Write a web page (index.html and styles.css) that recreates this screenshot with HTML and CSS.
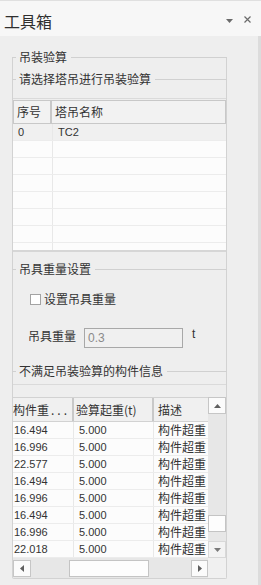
FILE: index.html
```html
<!DOCTYPE html>
<html lang="zh-CN">
<head>
<meta charset="utf-8">
<title>工具箱</title>
<link rel="stylesheet" href="styles.css">
</head>
<body>
<div class="titlebar">
  <span class="title">工具箱</span>
  <div class="tools">
    <svg class="ico-down" width="7" height="4" viewBox="0 0 7 4"><path d="M0 0h7L3.5 4z" fill="#6b6b6b"/></svg>
    <svg class="ico-close" width="7" height="7" viewBox="0 0 7 7"><path d="M0.5 0.5l6 6M6.5 0.5l-6 6" stroke="#6b6b6b" stroke-width="1.2"/></svg>
  </div>
</div>
<div class="main">
  <div class="content">
    <div class="outer">
      <div class="legend legend-top"><span>吊装验算</span></div>
      <div class="legend l-select"><span>请选择塔吊进行吊装验算</span></div>
      <div class="grid1">
        <div class="g1-head"><div class="h1">序号</div><div class="h2">塔吊名称</div></div>
        <div class="g1-body">
          <div class="g1-row sel"><div class="c1">0</div><div class="c2">TC2</div></div>
          <div class="g1-row"><div class="c1"></div><div class="c2"></div></div>
          <div class="g1-row"><div class="c1"></div><div class="c2"></div></div>
          <div class="g1-row"><div class="c1"></div><div class="c2"></div></div>
          <div class="g1-row"><div class="c1"></div><div class="c2"></div></div>
          <div class="g1-row"><div class="c1"></div><div class="c2"></div></div>
          <div class="g1-row"><div class="c1"></div><div class="c2"></div></div>
          <div class="g1-row"><div class="c1"></div><div class="c2"></div></div>
        </div>
      </div>
      <div class="legend l-sling"><span>吊具重量设置</span></div>
      <div class="check-row"><span class="checkbox"></span><span class="check-label">设置吊具重量</span></div>
      <div class="weight-row"><span class="wlabel">吊具重量</span><div class="winput">0.3</div><span class="unit">t</span></div>
      <div class="legend l-fail"><span>不满足吊装验算的构件信息</span></div>
      <div class="grid2">
        <div class="g2-top">
          <div class="g2-main">
            <div class="g2-head"><div class="d1">构件重<span class="dots">...</span></div><div class="d2">验算起重(t)</div><div class="d3">描述</div></div>
            <div class="g2-row"><div class="e1">16.494</div><div class="e2">5.000</div><div class="e3">构件超重</div></div>
            <div class="g2-row"><div class="e1">16.996</div><div class="e2">5.000</div><div class="e3">构件超重</div></div>
            <div class="g2-row"><div class="e1">22.577</div><div class="e2">5.000</div><div class="e3">构件超重</div></div>
            <div class="g2-row"><div class="e1">16.494</div><div class="e2">5.000</div><div class="e3">构件超重</div></div>
            <div class="g2-row"><div class="e1">16.996</div><div class="e2">5.000</div><div class="e3">构件超重</div></div>
            <div class="g2-row"><div class="e1">16.494</div><div class="e2">5.000</div><div class="e3">构件超重</div></div>
            <div class="g2-row"><div class="e1">16.996</div><div class="e2">5.000</div><div class="e3">构件超重</div></div>
            <div class="g2-row"><div class="e1">22.018</div><div class="e2">5.000</div><div class="e3">构件超重</div></div>
          </div>
          <div class="vscroll">
            <div class="sbtn up"><svg width="7" height="4" viewBox="0 0 7 4"><path d="M3.5 0L7 4H0z" fill="#5f5f5f"/></svg></div>
            <div class="vthumb"></div>
            <div class="sbtn down"><svg width="7" height="4" viewBox="0 0 7 4"><path d="M0 0h7L3.5 4z" fill="#7a7a7a"/></svg></div>
          </div>
        </div>
        <div class="hscroll-row">
          <div class="hscroll">
            <div class="sbtn left"><svg width="4" height="7" viewBox="0 0 4 7"><path d="M4 0v7L0 3.5z" fill="#5f5f5f"/></svg></div>
            <div class="hthumb"></div>
            <div class="sbtn right"><svg width="4" height="7" viewBox="0 0 4 7"><path d="M0 0v7l4-3.5z" fill="#5f5f5f"/></svg></div>
          </div>
          <div class="corner"></div>
        </div>
      </div>
    </div>
  </div>
  <div class="edge"></div>
</div>
</body>
</html>
```
FILE: styles.css
```css
* { box-sizing: border-box; }
html, body { margin: 0; padding: 0; }
body {
  width: 261px;
  height: 585px;
  overflow: hidden;
  background: #eeeeee;
  font-family: "Noto Sans CJK SC", "Noto Sans", sans-serif;
  font-size: 12px;
  color: #333333;
}
.titlebar {
  height: 36px;
  border-top: 1px solid #e0e0e0;
  background: #f7f7f7;
  display: flex;
  align-items: center;
  padding-left: 4px;
}
.title {
  font-size: 16px;
  line-height: 20px;
  color: #2f2f2f;
  margin-top: 4px;
}
.tools {
  margin-left: auto;
  display: flex;
  align-items: center;
  gap: 11px;
  padding-right: 10px;
}
.ico-down { display: block; margin-top: 4px; }
.ico-close { display: block; margin-top: 1px; }

.main { display: flex; height: 549px; }
.content { width: 258px; padding: 13px 0 0 12px; }
.edge { width: 3px; background: #dcdcdc; }

.outer {
  width: 215px;
  border: 1px solid #d2d2d2;
  border-top: none;
  border-radius: 0 0 2px 2px;
}
.legend {
  display: flex;
  align-items: center;
  height: 16px;
  line-height: 16px;
  margin: 0 -1px;
  white-space: nowrap;
}
.legend::before {
  content: "";
  width: 4px;
  height: 1px;
  background: #d0d0d0;
  margin-right: 3px;
}
.legend::after {
  content: "";
  flex: 1;
  height: 1px;
  background: #d0d0d0;
  margin-left: 4px;
}
.legend-top { background: linear-gradient(#eeeeee 0 8px, transparent 8px); }
.l-select { margin-top: 6px; }
.l-sling { margin-top: 9px; }
.l-fail { margin-top: 15px; }

.grid1 {
  margin-top: 11px;
  border-top: 1px solid #dadada;
  padding-top: 1px;
  border-bottom: 2px solid #d6d6d6;
}
.g1-head {
  height: 24px;
  border: 1px solid #c8c8c8;
  background: #f2f2f2;
  display: flex;
  line-height: 22px;
}
.h1 { width: 38px; border-right: 2px solid #c8c8c8; padding-left: 3px; }
.h2 { flex: 1; padding-left: 3px; }
.g1-body { height: 126px; overflow: hidden; background: #fcfcfc; }
.g1-row {
  height: 17px;
  display: flex;
  border-bottom: 1px solid #ececec;
  font-family: "Liberation Sans", Arial, sans-serif;
  font-size: 11px;
  line-height: 16px;
}
.g1-row.sel { background: #f0f0f0; }
.c1 { width: 40px; border-right: 1px solid #e8e8e8; padding-left: 5px; }
.c2 { flex: 1; padding-left: 5px; }

.check-row {
  display: flex;
  align-items: center;
  height: 16px;
  margin-top: 14px;
  padding-left: 17px;
  line-height: 16px;
}
.checkbox {
  width: 11px;
  height: 11px;
  border: 1px solid #a3a3a3;
  background: #ffffff;
}
.check-label { margin-left: 3px; }

.weight-row {
  display: flex;
  align-items: flex-start;
  height: 20px;
  margin-top: 21px;
  padding-left: 15px;
}
.wlabel { width: 48px; line-height: 16px; }
.winput {
  width: 99px;
  height: 20px;
  margin-left: 8px;
  border: 1px solid #a8a8a8;
  background: #f0f0f0;
  padding-left: 3px;
  font-family: "Liberation Sans", Arial, sans-serif;
  font-size: 12px;
  line-height: 18px;
  color: #8a8a8a;
}
.unit {
  margin-left: 9px;
  margin-top: -2px;
  font-family: "Liberation Sans", Arial, sans-serif;
  font-size: 12px;
  line-height: 16px;
}

.grid2 {
  margin-top: 5px;
  border-top: 1px solid #dadada;
  padding-top: 12px;
}
.g2-top { display: flex; }
.g2-main { width: 195px; overflow: hidden; }
.g2-head {
  height: 25px;
  display: flex;
  border-top: 1px solid #d2d2d2;
  border-bottom: 1px solid #d2d2d2;
  background: #f0f0f0;
  line-height: 23px;
  white-space: nowrap;
}
.d1 { width: 61px; border-right: 2px solid #c8c8c8; overflow: hidden; }
.dots { letter-spacing: 3px; margin-left: 2px; }
.d2 { width: 80px; border-right: 2px solid #c8c8c8; padding-left: 2px; overflow: hidden; }
.d3 { flex: 1; padding-left: 4px; }
.g2-row {
  height: 17px;
  display: flex;
  border-bottom: 1px solid #ececec;
  background: #fcfcfc;
  line-height: 16px;
  white-space: nowrap;
}
.e1, .e2 { font-family: "Liberation Sans", Arial, sans-serif; font-size: 11px; }
.e1 { width: 61px; border-right: 1px solid #e8e8e8; padding-left: 1px; }
.e2 { width: 80px; border-right: 1px solid #e8e8e8; padding-left: 5px; }
.e3 { flex: 1; padding-left: 4px; overflow: hidden; }

.vscroll {
  width: 18px;
  height: 161px;
  background: #e7e7e7;
  display: flex;
  flex-direction: column;
}
.sbtn {
  display: flex;
  align-items: center;
  justify-content: center;
  border: 1px solid #c6c6c6;
  background: #fbfbfb;
}
.sbtn svg { display: block; }
.up, .down { height: 17px; }
.down { border-color: #d8d8d8; background: #f3f3f3; }
.vthumb {
  margin-top: auto;
  height: 17px;
  border: 1px solid #c4c4c4;
  background: #fdfdfd;
  margin-bottom: 9px;
}
.hscroll-row { display: flex; height: 20px; }
.hscroll {
  width: 195px;
  background: #e7e7e7;
  display: flex;
  padding: 2px 0 1px;
}
.left, .right { width: 18px; height: 17px; }
.right { margin-left: auto; width: 17px; }
.hthumb {
  width: 80px;
  height: 17px;
  margin-left: 38px;
  border: 1px solid #c4c4c4;
  background: #fdfdfd;
}
.corner { width: 18px; background: #f0f0f0; }
```
